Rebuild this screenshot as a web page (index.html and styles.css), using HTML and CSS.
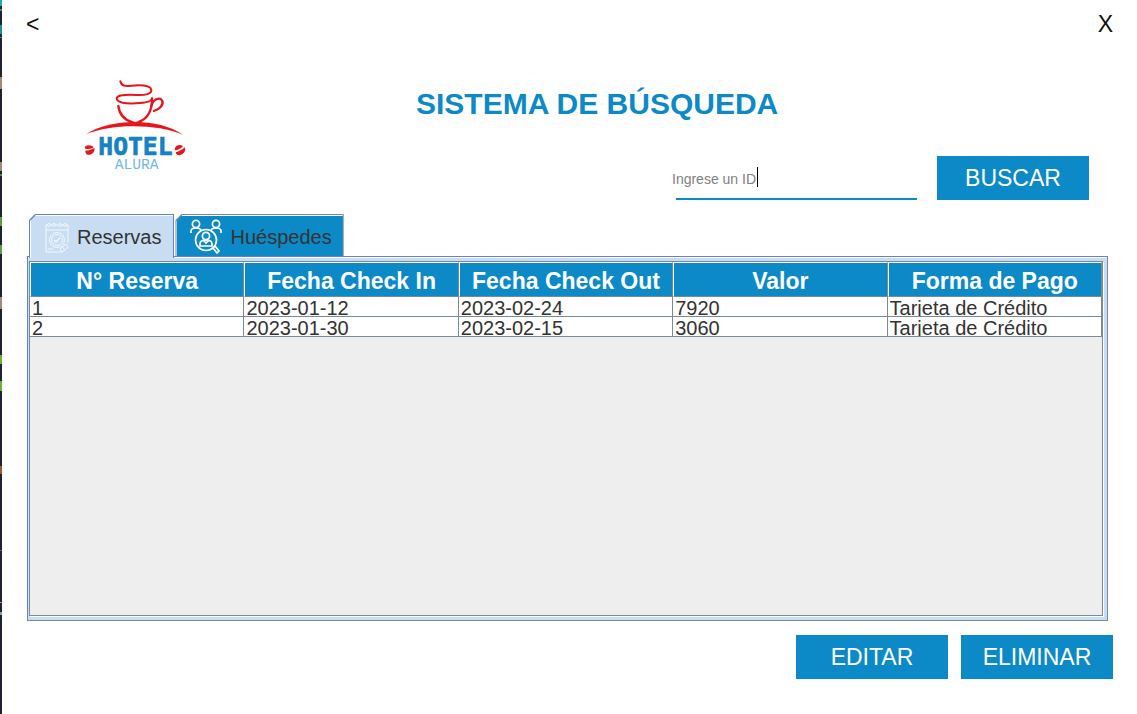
FILE: index.html
```html
<!DOCTYPE html>
<html lang="es">
<head>
<meta charset="utf-8">
<meta name="viewport" content="width=device-width, initial-scale=1">
<title>Sistema de Búsqueda</title>
<link rel="stylesheet" href="styles.css">
</head>
<body>
<div class="backdrop-edge"></div>
<main class="window">
  <nav class="titlebar">
    <button class="window-button back" type="button" aria-label="Volver">&lt;</button>
    <button class="window-button" type="button" aria-label="Cerrar">X</button>
  </nav>

  <header class="header">
    <svg class="logo" viewBox="31 28 306 276" role="img" aria-label="Hotel Alura">
      <g fill="none" stroke="#e8151b" stroke-linecap="round" stroke-linejoin="round">
        <path stroke-width="6" d="M137 32c3 14 14 15 33 13 24-2 56-3 60 12 2 13-18 17-43 16-36-2-61 0-61 10 0 14 28 16 57 15 27-1 49-6 49-15"/>
        <path stroke-width="7" d="M131 106c3 24 17 41 41 48M232 84c0 35-12 59-38 69"/>
        <path stroke-width="7" d="M230 106c5-20 24-28 32-17 7 14-8 26-24 32"/>
        <path stroke-width="10" d="M168 156c9 3 19 3 28 0"/>
      </g>
      <path fill="#e8151b" d="M35 190c72-47 216-50 290 2-78-33-211-34-290-2z"/>
      <g fill="#e8151b">
        <path d="M30 229c7-8 22-6 27 1-6 5-17 6-25 4zM32 240c9 0 19-3 27-8 4 11-9 23-20 20-5-2-7-6-7-12z"/>
        <path d="M301 239c-3-13 13-20 24-13-4 7-13 11-24 13zM303 245c10-2 20-8 27-15 5 10-3 22-16 24-7 0-10-3-11-9z"/>
      </g>
      <text class="logo-name" x="71" y="253">HOTEL</text>
      <text class="logo-sub" x="186" y="295">ALURA</text>
    </svg>
    <h1 class="title">SISTEMA DE BÚSQUEDA</h1>
    <form class="search">
      <div class="search-field">
        <input class="search-input" type="text" aria-label="Ingrese un ID" value="Ingrese un ID">
        <span class="caret"></span>
      </div>
      <button class="action" type="button">BUSCAR</button>
    </form>
  </header>

  <section class="results">
    <div class="tabs" role="tablist">
      <button class="tab tab-active" type="button" role="tab" aria-selected="true">
        <span class="tab-face">
          <svg class="tab-icon tab-icon-small" viewBox="0 0 24 32" aria-hidden="true">
            <g fill="none" stroke="#f2f7fc" stroke-width="1">
              <path d="M2 4H1v27h17M22 4h1v18M1 9h22M5 4h2M10 4h3M16 4h2"/>
              <circle cx="4" cy="4" r="1.5"/><circle cx="9" cy="4" r="1.5"/><circle cx="15" cy="4" r="1.5"/><circle cx="20" cy="4" r="1.5"/>
              <circle cx="12" cy="19" r="7.5"/><circle cx="12" cy="19" r="5.5"/>
              <path stroke-width="1.5" d="M9 19l2 2 4-4"/>
              <path d="M15 28l6-5 2 3-6 5zM17 26l3 3M3 28h5"/>
            </g>
          </svg>
          <span>Reservas</span>
        </span>
      </button>
      <button class="tab" type="button" role="tab" aria-selected="false">
        <span class="tab-face">
          <svg class="tab-icon" viewBox="0 0 32 36" aria-hidden="true">
            <g fill="none" stroke="#fff" stroke-width="1.7">
              <circle cx="6" cy="5" r="3.6"/><circle cx="26" cy="5" r="3.6"/>
              <path d="M1 14v-2c0-2 2-3 5-3s5 1 5 3M31 14v-2c0-2-2-3-5-3s-5 1-5 3"/>
              <circle cx="16" cy="21" r="10.5"/>
              <circle cx="16" cy="17" r="3.6"/>
              <path d="M10 27v-2c0-3 2-4 6-4s6 1 6 4v2zM13 21l3 3 3-3"/>
              <path d="M23 29l2-2 4 5-2 2z"/>
            </g>
          </svg>
          <span>Huéspedes</span>
        </span>
      </button>
    </div>
    <div class="panel">
      <div class="scroll">
        <table class="table">
          <thead>
            <tr><th scope="col">N° Reserva</th><th scope="col">Fecha Check In</th><th scope="col">Fecha Check Out</th><th scope="col">Valor</th><th scope="col">Forma de Pago</th></tr>
          </thead>
          <tbody>
            <tr><td><div class="cell">1</div></td><td><div class="cell">2023-01-12</div></td><td><div class="cell">2023-02-24</div></td><td><div class="cell">7920</div></td><td><div class="cell">Tarjeta de Crédito</div></td></tr>
            <tr><td><div class="cell">2</div></td><td><div class="cell">2023-01-30</div></td><td><div class="cell">2023-02-15</div></td><td><div class="cell">3060</div></td><td><div class="cell">Tarjeta de Crédito</div></td></tr>
          </tbody>
        </table>
      </div>
    </div>
  </section>

  <footer class="footer">
    <button class="action" type="button">EDITAR</button>
    <button class="action" type="button">ELIMINAR</button>
  </footer>
</main>
</body>
</html>
```
FILE: styles.css
```css
:root {
  --blue: #0c8ac7;
  --steel: #7a8a99;
  --edge: #6382bf;
  --pale: #c8ddf2;
  --ink: #333;
}

* { box-sizing: border-box; }

body {
  margin: 0;
  min-height: 100vh;
  display: flex;
  background: #fff;
  color: var(--ink);
  font-family: "Liberation Sans", Arial, sans-serif;
}

button, input { font-family: inherit; }

/* Sliver of the editor behind the window */
.backdrop-edge {
  width: 2px;
  flex: none;
  background: linear-gradient(
    #1ca8b8 0 6px, #1e2233 6px 9px, #4f8a55 9px 11px, #1e2233 11px 25px,
    #1c8fa0 25px 34px, #1e2233 34px 37px, #4f8a55 37px 38px, #1e2233 38px 77px,
    #a08a70 77px 89px, #1e2233 89px 162px, #a08a70 162px 171px, #1e2233 171px 174px,
    #4f8a55 174px 176px, #1e2233 176px 217px, #5f9a45 217px 226px, #1e2233 226px 245px,
    #5f9a45 245px 254px, #1e2233 254px 297px, #a08a70 297px 309px, #1e2233 309px 355px,
    #6fae3c 355px 364px, #1e2233 364px 381px, #6fae3c 381px 391px, #1e2233 391px 466px,
    #9a5a38 466px 474px, #1e2233 474px 550px, #7a3fd0 550px 551px, #1e2233 551px 602px,
    #999 602px 603px, #1e2233 603px 612px, #7fa77f 612px 615px, #1e2233 615px);
}

.window {
  flex: 1;
  min-width: 0;
  display: flex;
  flex-direction: column;
}

.titlebar {
  height: 48px;
  padding: 0 22px;
  display: flex;
  justify-content: space-between;
  align-items: center;
}

.window-button {
  padding: 0 2px;
  border: 0;
  background: none;
  color: #111;
  font-size: 23px;
}

.header {
  display: grid;
  grid-template-columns: 102px 1fr;
  grid-template-rows: 48px 44px;
  row-gap: 28px;
  padding: 32px 48px 14px 83px;
}

.logo {
  grid-row: 1 / 3;
  width: 102px;
  height: 92px;
  overflow: visible;
}

.logo-name {
  font: bold 74px "DejaVu Sans Mono", monospace;
  fill: #1583c3;
  stroke: #1583c3;
  stroke-width: 2px;
}

.logo-sub {
  font: 44px "Liberation Mono", monospace;
  fill: #6fb9e0;
  text-anchor: middle;
}

.title {
  margin: 0;
  padding-left: 229px;
  color: var(--blue);
  font-size: 30px;
  line-height: 48px;
  white-space: nowrap;
}

.search {
  display: flex;
  justify-content: flex-end;
  gap: 20px;
}

.search-field {
  position: relative;
  width: 245px;
  display: flex;
  flex-direction: column;
}

.search-field::after {
  content: "";
  height: 2px;
  margin-left: 4px;
  background: var(--blue);
}

.search-input {
  flex: 1;
  width: 100%;
  min-width: 0;
  padding: 4px 0 0;
  border: 0;
  outline: 0;
  background: none;
  color: #808080;
  font-size: 14px;
}

.caret {
  position: absolute;
  left: 85px;
  top: 11px;
  width: 1px;
  height: 20px;
  background: #000;
}

.action {
  width: 152px;
  height: 44px;
  padding: 0;
  border: 0;
  background: var(--blue);
  color: #fff;
  font-size: 23px;
}

.results {
  flex: 1;
  display: flex;
  flex-direction: column;
  padding: 0 29px 0 25px;
}

.tabs {
  display: flex;
  gap: 1px;
  height: 42px;
  padding-left: 2px;
}

.tab {
  position: relative;
  display: flex;
  padding: 1px 1px 0;
  border: 0;
  background: var(--steel);
  color: var(--ink);
  font-size: 20px;
  clip-path: polygon(6px 0, 100% 0, 100% 100%, 0 100%, 0 6px);
}

.tab-active {
  z-index: 1;
  height: 44px;
  background: var(--edge);
}

.tab-face {
  display: flex;
  align-items: center;
  gap: 8px;
  height: 100%;
  padding: 2px 11px 0 13px;
  border: solid #fff;
  border-width: 1px 0 0 1px;
  background: var(--blue);
  clip-path: polygon(6px 0, 100% 0, 100% 100%, 0 100%, 0 6px);
}

.tab-active .tab-face {
  padding: 0 12px 0 14px;
  background: var(--pale);
}

.tab-icon {
  width: 32px;
  height: 36px;
}

.tab-icon-small {
  width: 24px;
  height: 32px;
}

.panel {
  flex: 1;
  display: flex;
  padding: 4px 4px 4px 1px;
  border: 1px solid var(--steel);
  border-top-color: var(--edge);
  border-left-color: var(--edge);
  background: var(--pale);
  box-shadow: inset 0 1px #fff;
}

.scroll {
  flex: 1;
  min-width: 0;
  border: 1px solid var(--steel);
  background: #eee;
  box-shadow: 1px 1px #fff;
}

.table {
  width: 100%;
  table-layout: fixed;
  border-collapse: separate;
  border-spacing: 0;
}

.table th {
  height: 35px;
  padding: 2px 0 0;
  border: 1px solid;
  border-color: #fff var(--steel) var(--steel) #fff;
  background: var(--blue);
  color: #fff;
  font-size: 23px;
  line-height: 30px;
  white-space: nowrap;
}

.table td {
  padding: 0 0 0 2px;
  border: solid var(--steel);
  border-width: 0 1px 1px 0;
  background: #fff;
}

.cell {
  height: 19px;
  overflow: hidden;
  font-size: 20px;
  line-height: 22px;
  white-space: nowrap;
}

.footer {
  display: flex;
  justify-content: flex-end;
  gap: 13px;
  padding: 14px 24px 35px;
}
```
